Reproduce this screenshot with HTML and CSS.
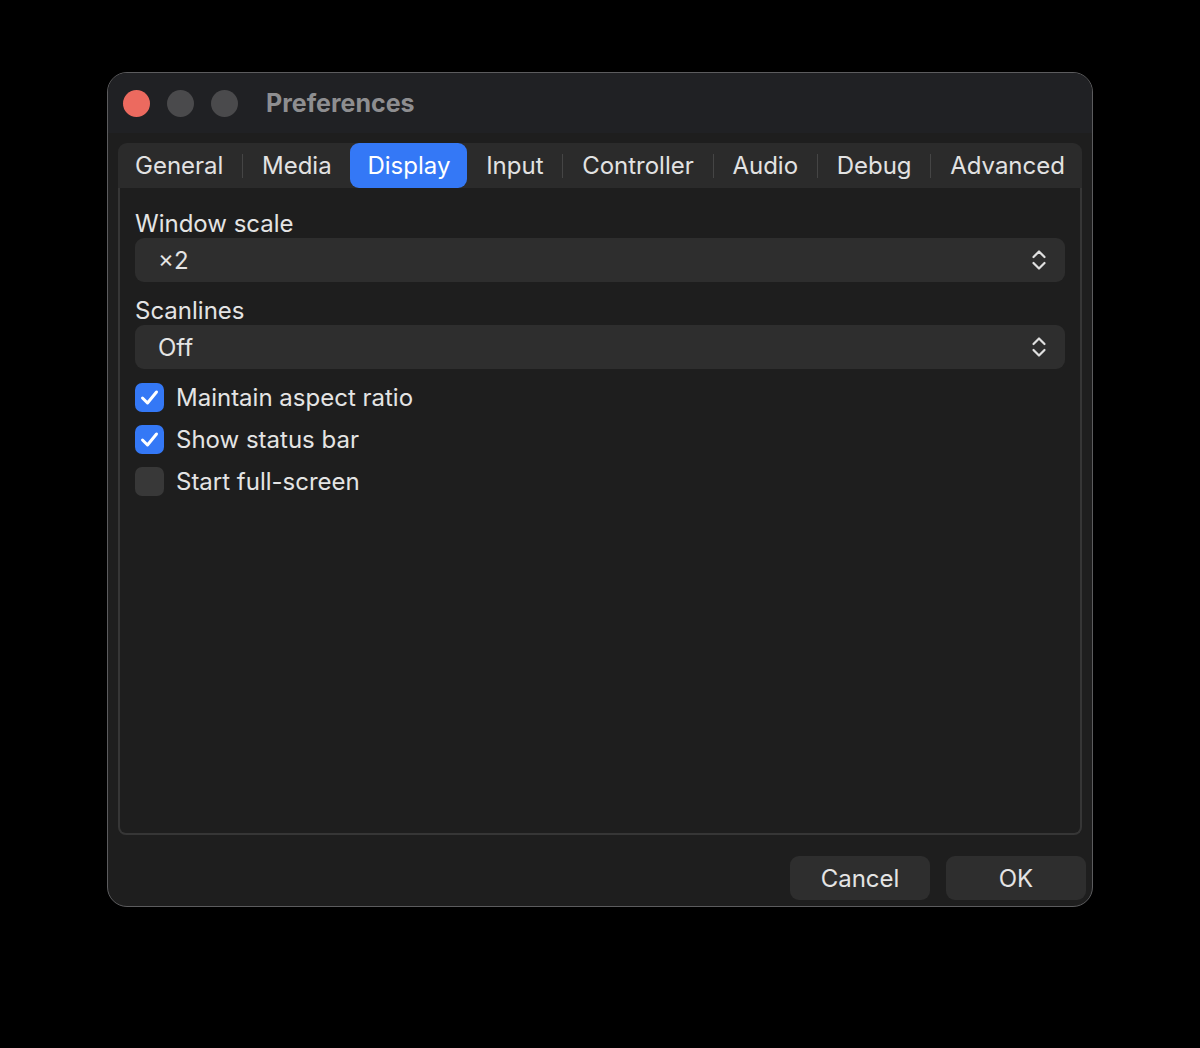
FILE: index.html
```html
<!DOCTYPE html>
<html lang="en">
<head>
    <meta charset="UTF-8">
    <title>Preferences</title>
    <link rel="stylesheet" href="styles.css">
</head>
<body>
    <div class="window">
        <div class="titlebar">
            <span class="light red"></span>
            <span class="light"></span>
            <span class="light"></span>
            <span class="title">Preferences</span>
        </div>

        <div class="content">
            <div class="tabs">
                <div class="tab">General</div>
                <span class="sep"></span>
                <div class="tab">Media</div>
                <div class="tab active">Display</div>
                <div class="tab">Input</div>
                <span class="sep"></span>
                <div class="tab">Controller</div>
                <span class="sep"></span>
                <div class="tab">Audio</div>
                <span class="sep"></span>
                <div class="tab">Debug</div>
                <span class="sep"></span>
                <div class="tab">Advanced</div>
            </div>

            <div class="panel">
                <div class="field">
                    <label>Window scale</label>
                    <div class="combo">
                        <span>×2</span>
                        <svg class="chevron" width="16" height="24" viewBox="0 0 16 24">
                            <path d="M2.5 9 L8 3.5 L13.5 9 M2.5 15 L8 20.5 L13.5 15" />
                        </svg>
                    </div>
                </div>
                <div class="field">
                    <label>Scanlines</label>
                    <div class="combo">
                        <span>Off</span>
                        <svg class="chevron" width="16" height="24" viewBox="0 0 16 24">
                            <path d="M2.5 9 L8 3.5 L13.5 9 M2.5 15 L8 20.5 L13.5 15" />
                        </svg>
                    </div>
                </div>

                <div class="checks">
                    <div class="check-row">
                        <span class="box checked">
                            <svg width="29" height="29" viewBox="0 0 29 29"><path d="M7.5 15 L12.5 20 L21.5 9" /></svg>
                        </span>
                        Maintain aspect ratio
                    </div>
                    <div class="check-row">
                        <span class="box checked">
                            <svg width="29" height="29" viewBox="0 0 29 29"><path d="M7.5 15 L12.5 20 L21.5 9" /></svg>
                        </span>
                        Show status bar
                    </div>
                    <div class="check-row">
                        <span class="box"></span>
                        Start full-screen
                    </div>
                </div>
            </div>
        </div>

        <div class="footer">
            <button>Cancel</button>
            <button>OK</button>
        </div>
    </div>
</body>
</html>
```

FILE: styles.css
```css
body {
    margin: 0;
    padding: 72px 0 0 107px;
    background: #000;
    font-family: Inter, "Noto Sans", sans-serif;
    color: #e4e4e4;
}
.window {
    width: 984px;
    height: 833px;
    border: 1px solid #5c5c5e;
    border-radius: 20px;
    background: #1e1e1e;
    overflow: hidden;
    display: flex;
    flex-direction: column;
}
.titlebar {
    height: 60px;
    background: #202124;
    display: flex;
    align-items: center;
    padding-left: 15px;
    gap: 17px;
    flex: none;
}
.light {
    width: 27px;
    height: 27px;
    border-radius: 50%;
    background: #4a4a4c;
}
.light.red {
    background: #ec6a5f;
}
.title {
    margin-left: 11px;
    font-size: 25px;
    font-weight: 700;
    color: #8e8e90;
}
.content {
    flex: 1;
    display: flex;
    flex-direction: column;
    padding: 10px 10px 0 10px;
}
.tabs {
    height: 45px;
    background: #2b2b2b;
    border-radius: 9px 9px 0 0;
    display: flex;
    align-items: center;
    justify-content: space-between;
}
.tab {
    height: 45px;
    line-height: 45px;
    padding: 0 17px;
    font-size: 24px;
    color: #e2e2e2;
    border-radius: 9px;
}
.tab.active {
    background: #3478f6;
    color: #fff;
}
.sep {
    width: 1px;
    height: 24px;
    background: #454545;
}
.panel {
    flex: 1;
    border: 2px solid #363636;
    border-top: none;
    border-radius: 0 0 8px 8px;
    padding: 22px 15px 0 15px;
}
.field {
    margin-bottom: 15px;
}
.field label {
    display: block;
    height: 28px;
    line-height: 28px;
    font-size: 24px;
}
.combo {
    height: 44px;
    background: #2e2e2e;
    border-radius: 9px;
    display: flex;
    align-items: center;
    justify-content: space-between;
    padding: 0 18px 0 23px;
    font-size: 24px;
}
.chevron path {
    fill: none;
    stroke: #e0e0e0;
    stroke-width: 2.2;
    stroke-linecap: round;
    stroke-linejoin: round;
}
.checks {
    margin-top: -8px;
}
.check-row {
    height: 42px;
    display: flex;
    align-items: center;
    gap: 12px;
    font-size: 24px;
}
.box {
    width: 29px;
    height: 29px;
    border-radius: 7px;
    background: #383838;
    display: flex;
}
.box.checked {
    background: #3478f6;
}
.box path {
    fill: none;
    stroke: #fff;
    stroke-width: 3;
    stroke-linecap: round;
    stroke-linejoin: round;
}
.footer {
    flex: none;
    display: flex;
    justify-content: flex-end;
    gap: 16px;
    padding: 21px 6px 6px 0;
}
.footer button {
    width: 140px;
    height: 44px;
    border: none;
    border-radius: 9px;
    background: #2e2e2e;
    color: #e4e4e4;
    font-family: inherit;
    font-size: 24px;
}
```
